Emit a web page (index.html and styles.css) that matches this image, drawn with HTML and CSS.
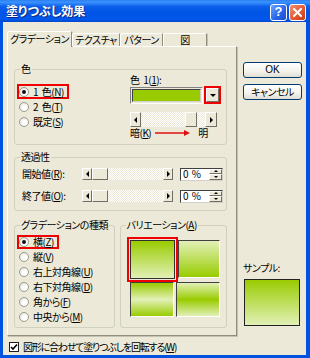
FILE: index.html
```html
<!DOCTYPE html>
<html lang="ja">
<head>
<meta charset="utf-8">
<link rel="stylesheet" href="styles.css">
</head>
<body>
<div class="window">
  <div class="titlebar">
    <span class="title">塗りつぶし効果</span>
    <div class="tbtns">
      <span class="tbtn help">?</span>
      <span class="tbtn close"><svg width="9" height="9" viewBox="0 0 9 9"><path d="M1 1L8 8M8 1L1 8" stroke="#fff" stroke-width="2" stroke-linecap="square"/></svg></span>
    </div>
  </div>
  <div class="client">
    <div class="main">
      <div class="left">
        <div class="tabs">
          <div class="tab active">グラデーション</div>
          <div class="tab w48">テクスチャ</div>
          <div class="tab w43">パターン</div>
          <div class="tab w44">図</div>
        </div>
        <div class="panel">
          <div class="grp g-color">
            <div class="grp-title">色</div>
            <div class="color-body">
              <div class="radios">
                <label class="radio hl"><span class="rb on"></span><span>1 色(<u>N</u>)</span></label>
                <label class="radio"><span class="rb"></span><span>2 色(<u>T</u>)</span></label>
                <label class="radio"><span class="rb"></span><span>既定(<u>S</u>)</span></label>
              </div>
              <div class="color-right">
                <div class="c1label">色 1(<u>1</u>):</div>
                <div class="combo-row">
                  <div class="combo"><div class="swatch"></div></div>
                  <div class="ddwrap"><div class="ddbtn"><span class="tri tri-d"></span></div></div>
                </div>
                <div class="sb sb-color">
                  <span class="sb-btn"><span class="tri tri-l"></span></span>
                  <span class="sb-track"><span class="sb-thumb"></span></span>
                  <span class="sb-btn"><span class="tri tri-r"></span></span>
                </div>
                <div class="dl">
                  <span>暗(<u>K</u>)</span>
                  <svg class="redarrow" width="36" height="6" viewBox="0 0 36 6"><path d="M0 3H30" stroke="#e01010" stroke-width="1.5"/><path d="M29 0L35 3L29 6Z" fill="#e01010"/></svg>
                  <span class="light">明</span>
                </div>
              </div>
            </div>
          </div>

          <div class="grp g-trans">
            <div class="grp-title">透過性</div>
            <div class="trow first">
              <span class="tlabel">開始値(<u>R</u>):</span>
              <div class="sb sb-t">
                <span class="sb-btn"><span class="tri tri-l"></span></span>
                <span class="sb-track"><span class="sb-thumb"></span></span>
                <span class="sb-btn"><span class="tri tri-r"></span></span>
              </div>
              <div class="spin"><span class="spin-val">0 %</span><span class="spinbtns"><span class="sp"><span class="tri tri-su"></span></span><span class="sp"><span class="tri tri-sd"></span></span></span></div>
            </div>
            <div class="trow">
              <span class="tlabel">終了値(<u>O</u>):</span>
              <div class="sb sb-t">
                <span class="sb-btn"><span class="tri tri-l"></span></span>
                <span class="sb-track"><span class="sb-thumb"></span></span>
                <span class="sb-btn"><span class="tri tri-r"></span></span>
              </div>
              <div class="spin"><span class="spin-val">0 %</span><span class="spinbtns"><span class="sp"><span class="tri tri-su"></span></span><span class="sp"><span class="tri tri-sd"></span></span></span></div>
            </div>
          </div>

          <div class="bottom-groups">
            <div class="grp g-type">
              <div class="grp-title">グラデーションの種類</div>
              <div class="radios type-radios">
                <label class="radio hl"><span class="rb on"></span><span>横(<u>Z</u>)</span></label>
                <label class="radio"><span class="rb"></span><span>縦(<u>V</u>)</span></label>
                <label class="radio"><span class="rb"></span><span>右上対角線(<u>U</u>)</span></label>
                <label class="radio"><span class="rb"></span><span>右下対角線(<u>D</u>)</span></label>
                <label class="radio"><span class="rb"></span><span>角から(<u>F</u>)</span></label>
                <label class="radio"><span class="rb"></span><span>中央から(<u>M</u>)</span></label>
              </div>
            </div>
            <div class="grp g-var">
              <div class="grp-title">バリエーション(<u>A</u>)</div>
              <div class="tiles">
                <div class="tile-sel"><div class="tile t1"></div></div>
                <div class="tile t2"></div>
                <div class="tile t3"></div>
                <div class="tile t4"></div>
              </div>
            </div>
          </div>
        </div>
      </div>
      <div class="right">
        <div class="btn ok">OK</div>
        <div class="btn cancel">キャンセル</div>
        <div class="sample-label">サンプル:</div>
        <div class="sample"></div>
      </div>
    </div>
    <label class="chkrow"><span class="chk"><svg width="8" height="8" viewBox="0 0 8 8"><path d="M1 4L3 6L7 1.5" stroke="#000" stroke-width="1.6" fill="none"/></svg></span><span class="chktext">図形に合わせて塗りつぶしを回転する(<u>W</u>)</span></label>
  </div>
</div>
</body>
</html>
```

FILE: styles.css
```css
* { box-sizing: border-box; }
body {
  margin: 0;
  font-family: "Noto Sans CJK JP", "Noto Sans", sans-serif;
  font-size: 10px;
  line-height: 12px;
  color: #000;
  font-feature-settings: "palt";
  letter-spacing: -0.5px;
  word-spacing: 2px;
}
u { text-decoration: underline; text-underline-offset: 1px; }

.window {
  width: 310px;
  height: 358px;
  display: flex;
  flex-direction: column;
  background: #0052E0;
}
.titlebar {
  height: 22px;
  flex: none;
  display: flex;
  align-items: center;
  justify-content: space-between;
  padding: 0 4px 0 6px;
  background: linear-gradient(#2A80F0 0%, #3C92FF 10%, #0A5EE8 30%, #0055E5 60%, #0058EA 88%, #0046CC 100%);
}
.title {
  color: #fff;
  font-weight: bold;
  font-size: 12px;
  letter-spacing: 0;
  text-shadow: 1px 1px 0 #0A2A8A;
}
.tbtns { display: flex; gap: 2px; margin-top: 2px; }
.tbtn {
  width: 17px;
  height: 17px;
  border: 1px solid #fff;
  border-radius: 3px;
  display: flex;
  align-items: center;
  justify-content: center;
  color: #fff;
  font-family: "Liberation Sans", sans-serif;
  font-weight: bold;
  font-size: 13px;
  letter-spacing: 0;
}
.help { background: linear-gradient(135deg, #6AA6FF, #2563EA 60%, #1B4FD0); }
.close { background: linear-gradient(135deg, #F39072, #E2552F 60%, #C23A16); }

.client {
  flex: 1;
  margin: 0 4px 3px 3px;
  background: #ECE9D8;
  display: flex;
  flex-direction: column;
}
.main { display: flex; height: 314px; flex: none; }
.left {
  margin: 9px 0 0 4px;
  width: 230px;
  display: flex;
  flex-direction: column;
}
.tabs {
  height: 15px;
  display: flex;
  align-items: flex-end;
  position: relative;
  z-index: 1;
}
.tab {
  height: 13px;
  width: 48px;
  text-align: center;
  line-height: 12px;
  border-top: 1px solid #fff;
  border-left: 1px solid #fff;
  border-right: 1px solid #8F8D80;
  box-shadow: 1px 0 0 #C5C2B2;
  border-radius: 2px 2px 0 0;
  background: #ECE9D8;
}
.tab.active { width: 65px; height: 16px; margin-bottom: -1px; line-height: 14px; }
.w48 { width: 48px; }
.w43 { width: 43px; }
.w44 { width: 44px; }

.panel {
  height: 290px;
  border: 1px solid;
  border-color: #fff #8F8D80 #8F8D80 #fff;
  box-shadow: 1px 1px 0 #C5C2B2;
  padding: 16px 9px 0 6px;
  display: flex;
  flex-direction: column;
}
.grp {
  border: 1px solid #D0D0BF;
  border-radius: 3px;
}
.grp-title {
  width: max-content;
  height: 12px;
  margin: -7px 0 0 5px;
  padding: 0 1px;
  background: #ECE9D8;
}
.g-color { height: 76px; margin-top: 6px; }
.color-body { display: grid; grid-template-columns: 115px 92px; }
.radios { padding-left: 4px; margin-top: 9px; }
.radio {
  display: flex;
  align-items: center;
  width: max-content;
  height: 15px;
}
.radio.hl {
  border: 2px solid #F00000;
  margin-left: -2px;
  padding-right: 3px;
}
.rb {
  width: 10px;
  height: 10px;
  margin-right: 4px;
  border-radius: 50%;
  border: 1px solid #9A9A8E;
  background: radial-gradient(circle at 65% 65%, #fff 30%, #E8E7E0 80%);
  display: flex;
  align-items: center;
  justify-content: center;
  flex: none;
}
.rb.on::after {
  content: "";
  width: 4px;
  height: 4px;
  border-radius: 50%;
  background: #111;
}
.color-right { display: flex; flex-direction: column; }
.c1label { margin-top: -1px; height: 12px; }
.combo-row { display: flex; height: 17px; margin-top: 1px; align-items: flex-start; }
.combo {
  width: 73px;
  height: 17px;
  border: 1px solid;
  border-color: #808080 #fff #fff #808080;
  padding: 1px;
}
.swatch {
  width: 100%;
  height: 100%;
  background: #99CC00;
  border: 1px solid;
  border-color: #404040 #D4D0C8 #D4D0C8 #404040;
}
.ddwrap {
  width: 17px;
  height: 18px;
  margin: -1px 0 0 1px;
  border: 2px solid #F00000;
}
.ddbtn {
  width: 100%;
  height: 100%;
  background: #ECE9D8;
  border: 1px solid;
  border-color: #fff #716F64 #716F64 #fff;
  display: flex;
  align-items: center;
  justify-content: center;
}
.tri { width: 0; height: 0; border-style: solid; border-color: transparent; }
.tri-d { border-width: 3px 3px 0 3px; border-top-color: #000; }
.tri-l { border-width: 3px 3px 3px 0; border-right-color: #000; }
.tri-r { border-width: 3px 0 3px 3px; border-left-color: #000; }
.tri-su { border-width: 0 2px 2px 2px; border-bottom-color: #000; }
.tri-sd { border-width: 2px 2px 0 2px; border-top-color: #000; }

.sb { display: flex; }
.sb-btn, .sb-thumb {
  background: #ECE9D8;
  border: 1px solid;
  border-color: #fff #716F64 #716F64 #fff;
  display: flex;
  align-items: center;
  justify-content: center;
  flex: none;
}
.sb-track {
  flex: 1;
  display: flex;
  background: repeating-conic-gradient(#fff 0 25%, #ECE9D8 0 50%) 0 0 / 2px 2px;
}
.sb-color { width: 87px; height: 15px; margin-top: 8px; }
.sb-color .sb-btn { width: 11px; }
.sb-color .sb-btn:last-child { width: 12px; }
.sb-color .sb-thumb { width: 12px; margin-left: 44px; }
.dl { display: flex; align-items: center; height: 12px; }
.redarrow { margin-left: 4px; }
.light { margin-left: 7px; }

.g-trans { height: 54px; margin-top: 12px; }
.trow { display: flex; height: 12px; padding-left: 7px; margin-top: 10px; align-items: center; }
.trow.first { margin-top: 5px; }
.tlabel { width: 60px; }
.sb-t { width: 91px; height: 12px; }
.sb-t .sb-btn { width: 10px; }
.sb-t .sb-thumb { width: 16px; }
.spin {
  margin-left: 7px;
  width: 43px;
  height: 13px;
  background: #fff;
  border: 1px solid;
  border-color: #404040 #D4D0C8 #D4D0C8 #404040;
  display: flex;
  align-items: center;
  justify-content: space-between;
  padding-left: 2px;
}
.spinbtns { display: flex; flex-direction: column; height: 100%; width: 13px; }
.sp {
  flex: 1;
  background: #ECE9D8;
  border: 1px solid;
  border-color: #fff #716F64 #716F64 #fff;
  display: flex;
  align-items: center;
  justify-content: center;
}

.bottom-groups { display: flex; gap: 5px; margin-top: 14px; }
.g-type { width: 101px; height: 103px; }
.type-radios { margin-top: 4px; }
.type-radios .radio.hl { margin-top: 1px; height: 14px; }
.g-var { width: 108px; height: 103px; }
.tiles {
  display: grid;
  grid-template-columns: 51px 42px;
  grid-template-rows: 45px 36px;
  margin: 6px 0 0 6px;
}
.tile-sel { border: 2px solid #F00000; padding: 1px; }
.tile { border: 1px solid; border-color: #404040 #fff #fff #404040; }
.t1 { width: 45px; height: 39px; border-color: #303030; background: linear-gradient(#99CC00, #E2F0B7); }
.t2 { margin-top: 3px; width: 42px; height: 38px; background: linear-gradient(#E2F0B7, #99CC00); }
.t3 { margin-left: 3px; width: 44px; height: 35px; background: linear-gradient(#99CC00, #E2F0B7 50%, #99CC00); }
.t4 { margin-left: -2px; width: 44px; height: 35px; background: linear-gradient(#E2F0B7, #99CC00 50%, #E2F0B7); }

.right {
  margin-left: 6px;
  width: 60px;
  padding: 40px 0 10px;
  display: flex;
  flex-direction: column;
}
.btn {
  width: 59px;
  height: 16px;
  border: 1px solid #003C74;
  border-radius: 3px;
  background: linear-gradient(#FFFFFF, #F3F2EC 60%, #E0DDD2);
  text-align: center;
  line-height: 14px;
}
.btn.ok { font-family: "Liberation Sans", sans-serif; letter-spacing: 0; }
.btn.cancel { margin-top: 6px; }
.sample-label { margin-top: auto; height: 12px; }
.sample {
  margin: 5px 0 0 1px;
  width: 56px;
  height: 47px;
  border: 1px solid #222;
  background: linear-gradient(#99CC00, #E2F0B7);
}

.chkrow {
  flex: 1;
  display: flex;
  align-items: center;
  padding: 3px 0 0 6px;
}
.chk {
  width: 10px;
  height: 10px;
  margin-right: 4px;
  border: 1px solid #1C1C1C;
  background: #fff;
  display: flex;
  align-items: center;
  justify-content: center;
}
.chktext { letter-spacing: -1.2px; }
```
